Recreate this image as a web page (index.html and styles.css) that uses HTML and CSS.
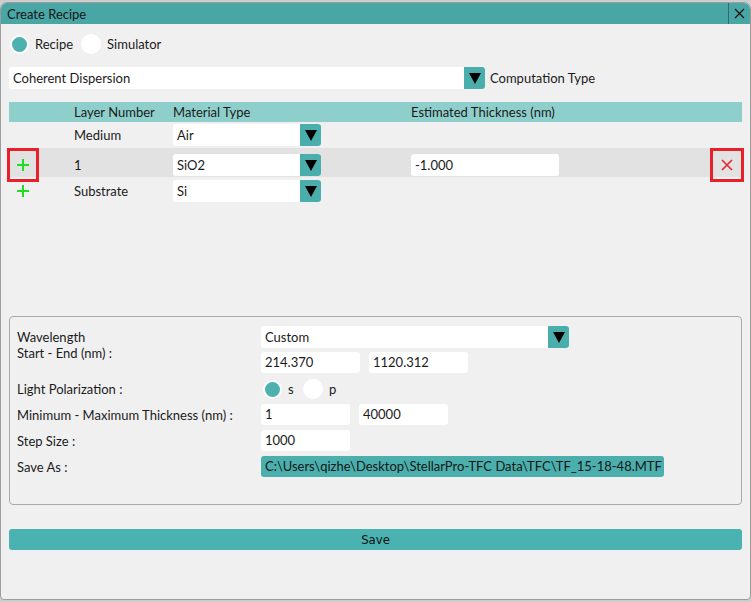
FILE: index.html
```html
<!DOCTYPE html>
<html lang="en">
<head>
    <meta charset="UTF-8">
    <title>Create Recipe</title>
    <link rel="stylesheet" href="styles.css">
</head>
<body>
<div class="window">
    <div class="titlebar">
        <span class="title">Create Recipe</span>
        <span class="close">
            <svg width="11" height="11" viewBox="0 0 11 11"><path d="M1 1l9 9M10 1L1 10" stroke="#111" stroke-width="1.2" fill="none"/></svg>
        </span>
    </div>

    <div class="content">
        <div class="mode-row">
            <span class="dot on"></span><span class="radio-label">Recipe</span>
            <span class="dot big"></span><span class="radio-label">Simulator</span>
        </div>

        <div class="type-row">
            <div class="select type-select">
                <span class="select-text">Coherent Dispersion</span>
                <span class="arrow"><svg width="12" height="11" viewBox="0 0 12 11"><path d="M0 0h12L6 11z" fill="#000"/></svg></span>
            </div>
            <span class="type-label">Computation Type</span>
        </div>

        <div class="layers">
            <div class="layer-grid layer-head">
                <span></span>
                <span>Layer Number</span>
                <span>Material Type</span>
                <span>Estimated Thickness (nm)</span>
                <span></span>
            </div>

            <div class="layer-grid layer-row">
                <span></span>
                <span>Medium</span>
                <div class="select mat-select">
                    <span class="select-text">Air</span>
                    <span class="arrow"><svg width="12" height="11" viewBox="0 0 12 11"><path d="M0 0h12L6 11z" fill="#000"/></svg></span>
                </div>
                <span></span>
                <span></span>
            </div>

            <div class="layer-grid layer-row alt">
                <span class="icon-btn boxed plus-btn">
                    <svg width="14" height="14" viewBox="0 0 14 14"><path d="M7 1v12M1 7h12" stroke="#1ee01e" stroke-width="2" fill="none"/></svg>
                </span>
                <span>1</span>
                <div class="select mat-select">
                    <span class="select-text">SiO2</span>
                    <span class="arrow"><svg width="12" height="11" viewBox="0 0 12 11"><path d="M0 0h12L6 11z" fill="#000"/></svg></span>
                </div>
                <span class="field thick-field">-1.000</span>
                <span class="icon-btn boxed del-btn">
                    <svg width="14" height="14" viewBox="0 0 14 14"><path d="M2 2l10 10M12 2L2 12" stroke="#e8232b" stroke-width="1.6" fill="none"/></svg>
                </span>
            </div>

            <div class="layer-grid layer-row sub">
                <span class="icon-btn plus-btn">
                    <svg width="14" height="14" viewBox="0 0 14 14"><path d="M7 1v12M1 7h12" stroke="#1ee01e" stroke-width="2" fill="none"/></svg>
                </span>
                <span>Substrate</span>
                <div class="select mat-select">
                    <span class="select-text">Si</span>
                    <span class="arrow"><svg width="12" height="11" viewBox="0 0 12 11"><path d="M0 0h12L6 11z" fill="#000"/></svg></span>
                </div>
                <span></span>
                <span></span>
            </div>
        </div>

        <div class="settings">
            <span class="set-label wave-label">Wavelength<br>Start - End (nm) :</span>
            <div class="select wave-select">
                <span class="select-text">Custom</span>
                <span class="arrow"><svg width="12" height="11" viewBox="0 0 12 11"><path d="M0 0h12L6 11z" fill="#000"/></svg></span>
            </div>
            <div class="pair">
                <span class="field wide-field">214.370</span>
                <span class="field wide-field">1120.312</span>
            </div>

            <span class="set-label">Light Polarization :</span>
            <div class="pol-row">
                <span class="dot on"></span><span class="pol-label">s</span>
                <span class="dot big"></span><span class="pol-label">p</span>
            </div>

            <span class="set-label">Minimum - Maximum Thickness (nm) :</span>
            <div class="pair">
                <span class="field">1</span>
                <span class="field">40000</span>
            </div>

            <span class="set-label">Step Size :</span>
            <div class="pair">
                <span class="field">1000</span>
            </div>

            <span class="set-label">Save As :</span>
            <div class="pair">
                <span class="path-box">C:\Users\qizhe\Desktop\StellarPro-TFC Data\TFC\TF_15-18-48.MTF</span>
            </div>
        </div>

        <button class="save-btn">Save</button>
    </div>
</div>
</body>
</html>
```

FILE: styles.css
```css
body {
    margin: 0;
    background-color: #cdcdcd;
    font-family: Lato, "Noto Sans", sans-serif;
    font-size: 13px;
    color: #1b1b1b;
}
.window {
    margin-top: 2px;
    height: 598px;
    box-sizing: border-box;
    border: 1px solid #9c9c9c;
    border-radius: 7px 7px 4px 4px;
    background-color: #f0f0f0;
    overflow: hidden;
}
.titlebar {
    height: 21px;
    background-color: #48a6a4;
    display: flex;
    align-items: center;
    padding-left: 6px;
}
.title {
    color: #161616;
}
.close {
    margin-left: auto;
    width: 21px;
    height: 21px;
    border-left: 1px solid #2f6c6b;
    display: flex;
    align-items: center;
    justify-content: center;
}
.content {
    padding: 0 8px;
}
.mode-row {
    display: flex;
    align-items: center;
    height: 20px;
    margin-top: 10px;
    padding-left: 1px;
}
.dot {
    width: 19px;
    height: 19px;
    border-radius: 50%;
    background-color: #fff;
    box-sizing: border-box;
    margin-right: 6px;
}
.dot.on {
    background-color: #4cb1af;
    border: 2px solid #fff;
}
.dot.big {
    width: 20px;
    height: 20px;
}
.radio-label {
    margin-right: 8px;
}
.type-row {
    display: flex;
    align-items: center;
    height: 22px;
    margin-top: 13px;
}
.select {
    display: flex;
    height: 22px;
    background-color: #fff;
    border-radius: 3px;
    overflow: hidden;
    box-sizing: border-box;
}
.select-text {
    flex: 1;
    padding-left: 4px;
    line-height: 22px;
}
.arrow {
    width: 21px;
    background-color: #4aaead;
    display: flex;
    align-items: center;
    justify-content: center;
}
.type-select {
    width: 476px;
}
.type-label {
    margin-left: 5px;
}
.layers {
    margin-top: 13px;
    height: 214px;
}
.layer-grid {
    display: grid;
    grid-template-columns: 65px 99px 238px 1fr 34px;
    align-items: center;
}
.layer-head {
    height: 20px;
    background-color: #8ecfcc;
}
.layer-row {
    height: 22px;
    margin-top: 2px;
}
.layer-row.alt {
    height: 29px;
    background-color: #e2e2e2;
}
.layer-row.sub {
    margin-top: 3px;
}
.mat-select {
    width: 148px;
}
.field {
    display: block;
    width: 89px;
    height: 21px;
    line-height: 21px;
    padding-left: 4px;
    background-color: #fff;
    border-radius: 3px;
    box-sizing: border-box;
}
.thick-field {
    width: 148px;
    height: 22px;
    line-height: 22px;
}
.wide-field {
    width: 99px;
}
.icon-btn {
    width: 32px;
    height: 34px;
    box-sizing: border-box;
    display: flex;
    align-items: center;
    justify-content: center;
}
.boxed {
    border: 3px solid #e8202a;
}
.plus-btn {
    margin-left: -2px;
}
.layer-row.sub .plus-btn {
    height: 22px;
}
.del-btn {
    width: 34px;
    justify-self: end;
    margin-right: -2px;
}
.settings {
    display: grid;
    grid-template-columns: 244px 1fr;
    grid-auto-rows: 22px;
    row-gap: 4px;
    height: 189px;
    box-sizing: border-box;
    padding: 9px 7px;
    border: 1px solid #a9a9a9;
    border-radius: 4px;
}
.set-label {
    display: flex;
    align-items: center;
}
.wave-label {
    grid-row: span 2;
    align-items: flex-start;
    line-height: 16px;
    padding-top: 3px;
}
.wave-select {
    width: 308px;
}
.pair {
    display: flex;
    gap: 9px;
}
.pol-row {
    display: flex;
    align-items: center;
    padding-left: 2px;
}
.pol-label {
    margin-right: 2px;
    width: 13px;
}
.path-box {
    width: 403px;
    height: 21px;
    line-height: 21px;
    padding-left: 4px;
    box-sizing: border-box;
    background-color: #4aafad;
    border-radius: 3px;
    color: #161616;
}
.save-btn {
    display: block;
    width: 100%;
    height: 21px;
    margin-top: 24px;
    border: none;
    border-radius: 3px;
    background-color: #4ab2b1;
    font-family: "DejaVu Sans Condensed", "Liberation Sans Narrow", sans-serif;
    font-stretch: condensed;
    font-size: 13px;
    color: #111;
    padding: 0;
}
```
